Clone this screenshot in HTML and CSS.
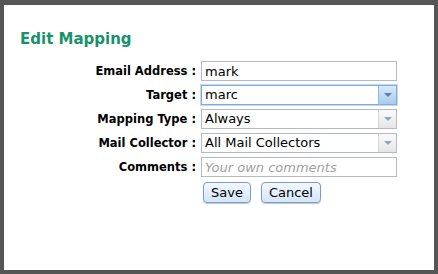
FILE: index.html
```html
<!DOCTYPE html>
<html lang="en">
<head>
  <meta charset="UTF-8">
  <title>Edit Mapping</title>
  <link rel="stylesheet" href="styles.css">
</head>
<body>
  <div class="dialog">
    <h2>Edit Mapping</h2>
    <div class="form">
      <label class="label" for="email">Email Address :</label>
      <input class="field" type="text" id="email" value="mark">

      <label class="label" for="target">Target :</label>
      <div class="combo focused">
        <span class="combo-text">marc</span>
        <span class="combo-btn"><span class="arrow"></span></span>
      </div>

      <label class="label">Mapping Type :</label>
      <div class="combo">
        <span class="combo-text">Always</span>
        <span class="combo-btn"><span class="arrow"></span></span>
      </div>

      <label class="label">Mail Collector :</label>
      <div class="combo">
        <span class="combo-text">All Mail Collectors</span>
        <span class="combo-btn"><span class="arrow"></span></span>
      </div>

      <label class="label" for="comments">Comments :</label>
      <input class="field" type="text" id="comments" placeholder="Your own comments">

      <div class="buttons">
        <button>Save</button>
        <button>Cancel</button>
      </div>
    </div>
  </div>
</body>
</html>
```

FILE: styles.css
```css
html, body {
  margin: 0;
  height: 100%;
}
body {
  background: #555555;
  padding: 5px 4px 4px 4px;
  box-sizing: border-box;
  font-family: "DejaVu Sans", Verdana, sans-serif;
}
.dialog {
  background: #fff;
  height: 100%;
  box-sizing: border-box;
  padding: 24px 16px 0 16px;
}
h2 {
  margin: 0 0 12px 0;
  font-size: 15px;
  color: #17936b;
  line-height: 20px;
}
.form {
  display: grid;
  grid-template-columns: 176px 196px;
  column-gap: 5px;
  row-gap: 4px;
  align-items: center;
}
.label {
  text-align: right;
  font-weight: bold;
  font-size: 11.5px;
  color: #000;
}
.field, .combo {
  box-sizing: border-box;
  height: 20px;
  border: 1px solid #b5b8c8;
  font-family: inherit;
  font-size: 13px;
  padding: 0 3px;
  margin: 0;
  color: #000;
}
.field::placeholder {
  color: #a0a0a0;
  font-style: italic;
}
.combo {
  display: flex;
  align-items: stretch;
  padding: 0;
}
.combo-text {
  flex: 1;
  padding: 0 3px;
  line-height: 18px;
}
.combo-btn {
  width: 17px;
  border-left: 1px solid #d4d4d4;
  background: linear-gradient(#fafafa, #e6e6e6);
  display: flex;
  align-items: center;
  justify-content: center;
}
.arrow {
  width: 0;
  height: 0;
  border-left: 4px solid transparent;
  border-right: 4px solid transparent;
  border-top: 4px solid #8fa4c4;
}
.focused {
  border-color: #7eadd9;
  box-shadow: 0 0 0 1px #c5daf0;
}
.focused .combo-btn {
  border-left-color: #8fb8e0;
  background: linear-gradient(#d9e9fa, #a9cbee);
}
.focused .arrow {
  border-top-color: #5a7fb0;
}
.buttons {
  grid-column: 2;
  display: flex;
  gap: 10px;
  margin: 1px 0 0 2px;
}
button {
  font-family: inherit;
  font-size: 13px;
  height: 21px;
  padding: 0 7px;
  border: 1px solid #7f9db9;
  border-radius: 4px;
  background: linear-gradient(#f2f8fe, #d4e6f8);
  color: #000;
  box-shadow: 0 1px 1px #b8c8d8;
}
```
